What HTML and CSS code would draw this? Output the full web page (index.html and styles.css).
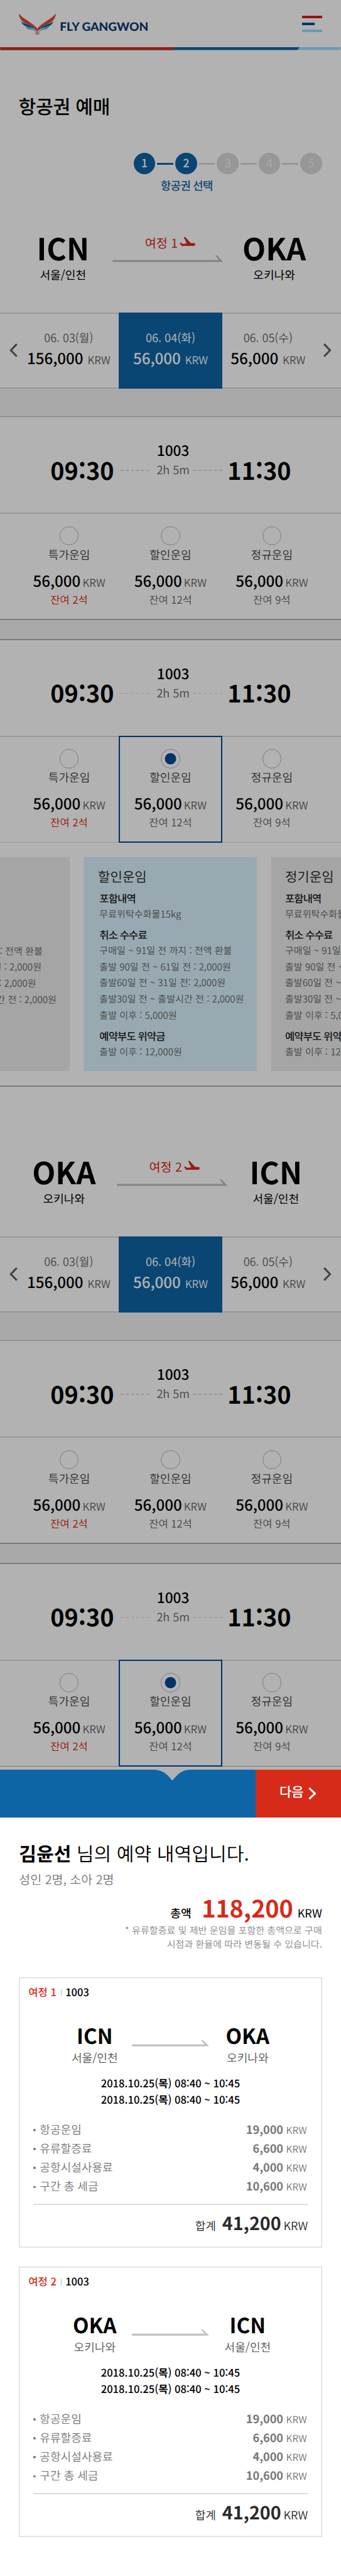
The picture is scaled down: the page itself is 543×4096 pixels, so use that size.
FILE: index.html
```html
<!DOCTYPE html>
<html lang="ko">
<head>
<meta charset="utf-8">
<meta name="viewport" content="width=device-width, initial-scale=1">
<title>항공권 예매 - FLY GANGWON</title>
<link rel="stylesheet" href="styles.css">
</head>
<body>
<svg class="defs" width="0" height="0" aria-hidden="true">
  <defs>
    <g id="wing">
      <path fill="#e5452f" d="M0 .3C8 12 29 20 38.800 32V36C34 30.500 27 26.500 19 23.500C7 18.500 .500 12 0 .3z"/>
      <path fill="#e5452f" d="M38.800 32V43.500C38 38 36.500 34.500 33 31z"/>
      <path fill="#0d65a6" d="M4.500 17.300C12 23 31 24.500 37.800 37.500C32.500 32.500 29 31 21 29.500C11.500 27.500 7.500 24 4.500 17.300z"/>
      <path fill="#5c9fd2" d="M13.700 27.700C20 31 33 30.500 37.200 42C31.500 35.500 29 35 23.500 34.200C18 33.200 15.500 31.500 13.700 27.700z"/>
      <path fill="#e5452f" d="M35.200 40h1v5h-1zM37.400 40h1.200v5h-1.200z"/>
    </g>
    <path id="plane" d="M0 12h3.500l3 2.500 8.500-1L8.800 0H12l11.500 12.600H30a3 3 0 0 1 0 6H4z"/>
  </defs>
</svg>
<div class="page">
  <div class="booking">
    <header class="header">
      <svg class="logo" width="274" height="46" viewBox="0 0 274 46">
        <use href="#wing"/>
        <use href="#wing" transform="translate(78 0) scale(-1 1)"/>
        <text class="logo-text" x="86.500" y="36.800" textLength="187" lengthAdjust="spacingAndGlyphs">FLY GANGWON</text>
      </svg>
      <div class="menu"><i></i><i></i><i></i></div>
    </header>
    <svg class="stripe" width="720" height="6" viewBox="0 0 720 6">
      <path fill="#9adcff" d="M0 0h720v6H0z"/>
      <path fill="#0d65a6" d="M0 0h633l-4.500 6H0z"/>
      <path fill="#d62b18" d="M0 0h369l-4.500 6H0z"/>
    </svg>
    <h1 class="title">항공권 예매</h1>
    <ol class="steps">
      <li class="on">1</li><li class="on">2</li><li>3</li><li>4</li><li>5</li>
    </ol>
    <p class="step-label">항공권 선택</p>

    <section class="route">
      <div class="place"><b>ICN</b><span>서울/인천</span></div>
      <div class="leg">
        <p>여정 1<svg width="33" height="19" viewBox="0 0 33 19"><use href="#plane"/></svg></p>
        <svg class="arrow" width="234" height="14" viewBox="0 0 234 14"><path d="M0 10h225l-8-10h4l13 14H0z"/></svg>
      </div>
      <div class="place"><b>OKA</b><span>오키나와</span></div>
    </section>
    <section class="dates">
      <svg class="prev" width="17" height="29" viewBox="0 0 17 29"><path d="M15.500 1.500L3 14.500l12.500 13"/></svg>
      <div class="date"><p>06. 03(월)</p><p class="price">156,000 <small>KRW</small></p></div>
      <div class="date on"><p>06. 04(화)</p><p class="price">56,000 <small>KRW</small></p></div>
      <div class="date"><p>06. 05(수)</p><p class="price">56,000 <small>KRW</small></p></div>
      <svg class="next" width="17" height="29" viewBox="0 0 17 29"><path d="M1.500 1.500L14 14.500l-12.500 13"/></svg>
    </section>

    <section class="flight first">
      <div class="times">
        <b>09:30</b><i class="dash"></i>
        <div class="info"><strong>1003</strong><span>2h 5m</span></div>
        <i class="dash"></i><b>11:30</b>
      </div>
      <div class="fares">
        <div class="fare"><i class="radio"></i><p class="name">특가운임</p><p class="price">56,000<small>KRW</small></p><p class="seats few">잔여 2석</p></div>
        <div class="fare"><i class="radio"></i><p class="name">할인운임</p><p class="price">56,000<small>KRW</small></p><p class="seats">잔여 12석</p></div>
        <div class="fare"><i class="radio"></i><p class="name">정규운임</p><p class="price">56,000<small>KRW</small></p><p class="seats">잔여 9석</p></div>
      </div>
    </section>
    <section class="flight open">
      <div class="times">
        <b>09:30</b><i class="dash"></i>
        <div class="info"><strong>1003</strong><span>2h 5m</span></div>
        <i class="dash"></i><b>11:30</b>
      </div>
      <div class="fares">
        <div class="fare"><i class="radio"></i><p class="name">특가운임</p><p class="price">56,000<small>KRW</small></p><p class="seats few">잔여 2석</p></div>
        <div class="fare selected"><i class="radio"></i><p class="name">할인운임</p><p class="price">56,000<small>KRW</small></p><p class="seats">잔여 12석</p></div>
        <div class="fare"><i class="radio"></i><p class="name">정규운임</p><p class="price">56,000<small>KRW</small></p><p class="seats">잔여 9석</p></div>
      </div>
    </section>
    <section class="details">
      <article class="detail before">
        <p class="pull">구매일 ~ 91일 전 까지 : 전액 환불</p>
        <p class="pull">출발 90일 전 ~ 61일 전 : 2,000원</p>
        <p class="pull">출발60일 전 ~ 31일 전: 2,000원</p>
        <p>출발30일 전 ~ 출발시간 전 : 2,000원</p>
      </article>
      <article class="detail current">
        <h2>할인운임</h2>
        <h3>포함내역</h3>
        <p>무료위탁수화물15kg</p>
        <h3>취소 수수료</h3>
        <p>구매일 ~ 91일 전 까지 : 전액 환불</p>
        <p>출발 90일 전 ~ 61일 전 : 2,000원</p>
        <p>출발60일 전 ~ 31일 전: 2,000원</p>
        <p>출발30일 전 ~ 출발시간 전 : 2,000원</p>
        <p>출발 이후 : 5,000원</p>
        <h3>예약부도 위약금</h3>
        <p>출발 이후 : 12,000원</p>
      </article>
      <article class="detail after">
        <h2>정기운임</h2>
        <h3>포함내역</h3>
        <p>무료위탁수화물15kg</p>
        <h3>취소 수수료</h3>
        <p>구매일 ~ 91일 전 까지 : 전액 환불</p>
        <p>출발 90일 전 ~ 61일 전 : 2,000원</p>
        <p>출발60일 전 ~ 31일 전: 2,000원</p>
        <p>출발30일 전 ~ 출발시간 전 : 2,000원</p>
        <p>출발 이후 : 5,000원</p>
        <h3>예약부도 위약금</h3>
        <p>출발 이후 : 12,000원</p>
      </article>
    </section>

    <section class="route return">
      <div class="place"><b>OKA</b><span>오키나와</span></div>
      <div class="leg">
        <p>여정 2<svg width="33" height="19" viewBox="0 0 33 19"><use href="#plane"/></svg></p>
        <svg class="arrow" width="234" height="14" viewBox="0 0 234 14"><path d="M0 10h225l-8-10h4l13 14H0z"/></svg>
      </div>
      <div class="place"><b>ICN</b><span>서울/인천</span></div>
    </section>
    <section class="dates">
      <svg class="prev" width="17" height="29" viewBox="0 0 17 29"><path d="M15.500 1.500L3 14.500l12.500 13"/></svg>
      <div class="date"><p>06. 03(월)</p><p class="price">156,000 <small>KRW</small></p></div>
      <div class="date on"><p>06. 04(화)</p><p class="price">56,000 <small>KRW</small></p></div>
      <div class="date"><p>06. 05(수)</p><p class="price">56,000 <small>KRW</small></p></div>
      <svg class="next" width="17" height="29" viewBox="0 0 17 29"><path d="M1.500 1.500L14 14.500l-12.500 13"/></svg>
    </section>
    <section class="flight first">
      <div class="times">
        <b>09:30</b><i class="dash"></i>
        <div class="info"><strong>1003</strong><span>2h 5m</span></div>
        <i class="dash"></i><b>11:30</b>
      </div>
      <div class="fares">
        <div class="fare"><i class="radio"></i><p class="name">특가운임</p><p class="price">56,000<small>KRW</small></p><p class="seats few">잔여 2석</p></div>
        <div class="fare"><i class="radio"></i><p class="name">할인운임</p><p class="price">56,000<small>KRW</small></p><p class="seats">잔여 12석</p></div>
        <div class="fare"><i class="radio"></i><p class="name">정규운임</p><p class="price">56,000<small>KRW</small></p><p class="seats">잔여 9석</p></div>
      </div>
    </section>
    <section class="flight">
      <div class="times">
        <b>09:30</b><i class="dash"></i>
        <div class="info"><strong>1003</strong><span>2h 5m</span></div>
        <i class="dash"></i><b>11:30</b>
      </div>
      <div class="fares">
        <div class="fare"><i class="radio"></i><p class="name">특가운임</p><p class="price">56,000<small>KRW</small></p><p class="seats few">잔여 2석</p></div>
        <div class="fare selected"><i class="radio"></i><p class="name">할인운임</p><p class="price">56,000<small>KRW</small></p><p class="seats">잔여 12석</p></div>
        <div class="fare"><i class="radio"></i><p class="name">정규운임</p><p class="price">56,000<small>KRW</small></p><p class="seats">잔여 9석</p></div>
      </div>
    </section>
  </div>

  <div class="actions">
    <div class="handle"><svg width="72" height="23" viewBox="0 0 72 23"><path fill="#b2b2b2" d="M0 0C14 1 24 7 36.500 23C49 7 58 1 72 0z"/></svg></div>
    <div class="go">다음<svg width="17" height="26" viewBox="0 0 17 26"><path d="M1.800 1.500L14 13 1.800 24.500"/></svg></div>
  </div>

  <div class="summary">
    <h2 class="greeting"><b>김윤선</b> 님의 예약 내역입니다.</h2>
    <p class="people">성인 2명, 소아 2명</p>
    <p class="grand"><span>총액</span><b>118,200</b><small>KRW</small></p>
    <p class="note">* 유류할증료 및 제반 운임을 포함한 총액으로 구매<br>시점과 환율에 따라 변동될 수 있습니다.</p>

    <article class="trip">
      <p class="trip-head"><b>여정 1</b><i></i>1003</p>
      <div class="trip-route">
        <div class="place"><b>ICN</b><span>서울/인천</span></div>
        <svg class="arrow" width="163" height="13" viewBox="0 0 163 13"><path d="M0 9h154l-8-9h4l13 13H0z"/></svg>
        <div class="place"><b>OKA</b><span>오키나와</span></div>
      </div>
      <p class="when">2018.10.25(<b>목</b>) 08:40 ~ 10:45<br>2018.10.25(<b>목</b>) 08:40 ~ 10:45</p>
      <ul class="costs">
        <li>항공운임<span><b>19,000</b>KRW</span></li>
        <li>유류할증료<span><b>6,600</b>KRW</span></li>
        <li>공항시설사용료<span><b>4,000</b>KRW</span></li>
        <li>구간 총 세금<span><b>10,600</b>KRW</span></li>
      </ul>
      <p class="sum"><span>합계</span><b>41,200</b><small>KRW</small></p>
    </article>
    <article class="trip">
      <p class="trip-head"><b>여정 2</b><i></i>1003</p>
      <div class="trip-route">
        <div class="place"><b>OKA</b><span>오키나와</span></div>
        <svg class="arrow" width="163" height="13" viewBox="0 0 163 13"><path d="M0 9h154l-8-9h4l13 13H0z"/></svg>
        <div class="place"><b>ICN</b><span>서울/인천</span></div>
      </div>
      <p class="when">2018.10.25(<b>목</b>) 08:40 ~ 10:45<br>2018.10.25(<b>목</b>) 08:40 ~ 10:45</p>
      <ul class="costs">
        <li>항공운임<span><b>19,000</b>KRW</span></li>
        <li>유류할증료<span><b>6,600</b>KRW</span></li>
        <li>공항시설사용료<span><b>4,000</b>KRW</span></li>
        <li>구간 총 세금<span><b>10,600</b>KRW</span></li>
      </ul>
      <p class="sum"><span>합계</span><b>41,200</b><small>KRW</small></p>
    </article>
  </div>
</div>
</body>
</html>
```
FILE: styles.css
```css
*, *::before, *::after { box-sizing: border-box; }
body, h1, h2, h3, p, ol, ul { margin: 0; padding: 0; }
ol, ul { list-style: none; }
b, strong { font-weight: 700; }
i { display: block; font-style: normal; }
svg { display: block; flex: none; }
.defs { position: absolute; }
body { overflow-x: hidden; background: #fff; }

.page {
  width: 720px;
  height: 5431px;
  overflow: hidden;
  zoom: 0.75412;
  font-family: "Noto Sans CJK KR", "Noto Sans", sans-serif;
  font-weight: 400;
  text-rendering: geometricPrecision;
  color: #000;
  white-space: nowrap;
}

/* Booking page, dimmed behind the summary sheet */
.booking { position: relative; height: 3732px; overflow: hidden; background: #fff; }
.booking::after { content: ""; position: absolute; inset: 0; background: rgba(0, 0, 0, .3); }

.header { display: flex; justify-content: space-between; height: 100px; padding: 28px 40px 0; }
.logo-text { font: 900 24.500px Lato, sans-serif; fill: #093971; }
.menu { display: flex; flex-direction: column; gap: 10px; width: 42px; padding-top: 5px; }
.menu i { height: 5px; background: #dd1a00; }
.menu i:nth-child(2) { width: 26px; background: #004996; }
.menu i:nth-child(3) { background: #9adcff; }

.title { margin: 87px 0 0 39px; font-size: 40px; font-weight: 500; line-height: 60px; letter-spacing: -.3px; }

.steps { display: flex; gap: 42px; margin: 69px 0 0 282px; }
.steps li { position: relative; width: 46px; height: 46px; border-radius: 50%; background: #d8d8d8; color: #f3f3f3; font-size: 24px; font-weight: 400; line-height: 43px; text-align: center; }
.steps li.on { background: #0d65a6; color: #fff; font-weight: 500; }
.steps li + li::before { content: ""; position: absolute; left: -38px; top: 21px; width: 34px; height: 4px; background: #d8d8d8; }
.steps li.on + li.on::before { background: #0d65a6; }
.step-label { width: 160px; margin: 6px 0 0 314px; color: #0d65a6; font-size: 24px; font-weight: 500; line-height: 36px; letter-spacing: -1.200px; text-align: center; }

.route { display: grid; grid-template-columns: 202px 234px 214px; height: 249px; padding: 80px 0 0 32px; }
.route .leg { margin-left: 4px; }
.route .place:last-child { margin-left: 4px; margin-right: -4px; }
.route.return { grid-template-columns: 216px 234px 203px; height: 316px; padding: 147px 0 0 27px; }
.place { text-align: center; }
.place b, .place span { display: block; }
.place b { font-kerning: none; }
.route .place b { font-size: 64px; line-height: 64px; }
.route .place span { margin-top: 8px; font-size: 24px; line-height: 36px; }
.leg p { display: flex; gap: 4px; padding: 3px 0 0 68px; color: #d62b18; font-size: 26px; line-height: 36px; }
.leg p svg { margin-top: 7px; fill: #d62b18; }
.arrow { fill: #bebebe; }
.leg .arrow { margin-top: 10px; }

.dates { display: grid; grid-template-columns: 40px 210px 220px 192px 58px; height: 160px; background: linear-gradient(#dcdcdc 2px, #fff 2px, #fff 158px, #dcdcdc 158px); }
.dates svg { margin-top: 65px; fill: none; stroke: #5f5f5f; stroke-width: 4; }
.prev { margin-left: 20px; }
.next { margin-left: 21px; }
.date { padding-top: 36px; color: #666; font-size: 24px; font-weight: 350; line-height: 36px; text-align: center; }
.price { color: #000; font-size: 32px; font-weight: 500; line-height: 48px; }
.price small { color: #666; font-size: 22.500px; font-weight: 350; line-height: 1; }
.date.on { background: #0d65a6; font-weight: 400; }
.date.on, .date.on .price, .date.on small { color: #fff; }

.flight { height: 470px; padding-top: 42px; background: linear-gradient(#f3f3f3 40px, #b2b2b2 40px, #b2b2b2 42px, #fff 42px); }
.flight.first { height: 488px; padding-top: 60px; background: linear-gradient(#f3f3f3 58px, #b2b2b2 58px, #b2b2b2 60px, #fff 60px); }
.times { display: grid; grid-template-columns: 163px 61px 93px 61px 155px; height: 202px; padding-left: 92px; text-align: center; }
.times b { margin-top: 81px; font-size: 50px; line-height: 60px; }
.dash { height: 2px; margin-top: 112px; background: repeating-linear-gradient(90deg, #d8d8d8 0 6px, transparent 6px 11px); }
.info { padding: 51px 0 0 6px; }
.info strong, .info span { display: block; }
.info strong { font-size: 30px; font-weight: 500; line-height: 40px; }
.info span { margin-top: 4px; color: #666; font-size: 24px; font-weight: 350; line-height: 36px; }
.fares { display: grid; grid-template-columns: 208px 220px 208px; height: 226px; padding-left: 42px; background: linear-gradient(#dcdcdc 2px, #fff 2px, #fff 224px, #b2b2b2 224px); }
.open .fares { background: linear-gradient(#dcdcdc 2px, #fff 2px, #fff 224px, #dcdcdc 224px); }
.fare { padding-top: 29px; text-align: center; }
.fare.selected { background: #fff; box-shadow: inset 0 0 0 2.700px #004996; }
.radio { width: 40px; height: 40px; margin: 0 auto; border: 2px solid #b4b4b4; border-radius: 50%; }
.selected .radio { background: radial-gradient(circle, #004996 11.500px, transparent 12.200px); }
.name { margin-top: 2px; color: #444; font-size: 24px; font-weight: 350; line-height: 36px; }
.fare .price { margin-top: 12px; }
.fare .price small { margin-left: 4px; }
.seats { color: #666; font-size: 22px; font-weight: 350; line-height: 34px; }
.seats.few { color: #dd1a00; }

.details { display: flex; gap: 30px; width: 1200px; height: 514px; margin-left: -219px; padding: 30px 0; background: linear-gradient(#fff 512px, #b2b2b2 512px); }
.detail { flex: none; width: 366px; height: 452px; padding: 23px 0 0 33px; background: #ececec; color: #666; font-size: 20px; font-weight: 350; }
.detail.before { padding-top: 182px; }
.detail.current { background: #daf3fe; }
.detail.after { padding-left: 29px; }
.detail h2 { margin-left: -3px; color: #333; font-size: 28px; font-weight: 400; line-height: 38px; }
.detail.after h2 { margin-left: 0; }
.detail h3 { margin-top: 8px; color: #1c1c1c; font-size: 22px; font-weight: 500; line-height: 34px; letter-spacing: -1.200px; }
.detail h2 + h3 { margin-top: 10px; }
.detail p { line-height: 34px; }
.detail h3 + p { margin-top: -1px; }
.detail p + h3 { margin-top: 10px; }
.detail p.pull { margin-left: -4px; }

/* Sheet handle and next button */
.actions { display: flex; height: 100px; }
.handle { width: 540px; padding-left: 327px; background: #0d65a6; }
.go { display: flex; gap: 9px; width: 180px; padding-left: 50px; background: #d62b18; color: #fff; font-size: 28px; font-weight: 500; line-height: 95px; }
.go svg { margin-top: 37px; fill: none; stroke: #fff; stroke-width: 4; }

/* Reservation summary */
.summary { padding: 46px 40px 0; }
.greeting { font-size: 40px; font-weight: 350; line-height: 60px; }
.people { margin-top: 6px; color: #777; font-size: 26px; font-weight: 350; line-height: 36px; }
.grand { display: flex; justify-content: flex-end; align-items: baseline; height: 60px; margin-top: 11px; line-height: 60px; }
.grand span { margin-right: 22px; font-size: 24px; font-weight: 500; }
.grand b { color: #d62b18; font-size: 50px; }
.grand small { margin-left: 9px; font-size: 24px; font-weight: 400; }
.note { margin-top: 6px; color: #888; font-size: 20px; font-weight: 350; line-height: 28px; text-align: right; }

.trip { height: 570px; margin-top: 56px; padding-top: 2px; box-shadow: inset 0 0 0 2px #ddd; }
.trip + .trip { margin-top: 40px; }
.trip-head { display: flex; padding: 13px 0 0 20px; font-size: 22px; font-weight: 500; line-height: 34px; }
.trip-head b { color: #d62b18; font-weight: 500; }
.trip-head i { width: 2px; height: 15px; margin: 10px 8px 0 9px; background: #bbb; }
.trip-route { display: grid; grid-template-columns: 120px 163px 120px; gap: 18px; margin: 44px 0 0 100px; }
.trip-route .place b { font-size: 44px; line-height: 60px; }
.trip-route .place span { color: #555; font-size: 24px; font-weight: 350; line-height: 36px; }
.trip-route .place:last-child { margin: 0 -4px 0 4px; }
.trip-route .arrow { margin-top: 40px; }
.when { margin-top: 18px; font-size: 22px; font-weight: 500; line-height: 34px; text-align: center; }
.costs { height: 179px; margin: 26px 30px 0; color: #777; font-size: 24px; font-weight: 350; line-height: 40px; background: linear-gradient(transparent 177px, #ddd 177px); }
.costs li { position: relative; display: flex; justify-content: space-between; height: 40px; padding: 0 2px 0 14px; }
.costs li::before { content: ""; position: absolute; left: 0; top: 19px; width: 5px; height: 5px; border-radius: 50%; background: #777; }
.costs span { font-size: 20.500px; }
.costs b { margin-right: 6px; font-size: 24px; }
.sum { display: flex; justify-content: flex-end; align-items: baseline; margin: 8px 30px 0; color: #2a2a2a; line-height: 60px; }
.sum span { margin-right: 13px; font-size: 24px; font-weight: 350; }
.sum b { font-size: 38px; }
.sum small { margin-left: 5px; font-size: 24px; font-weight: 350; }
```
